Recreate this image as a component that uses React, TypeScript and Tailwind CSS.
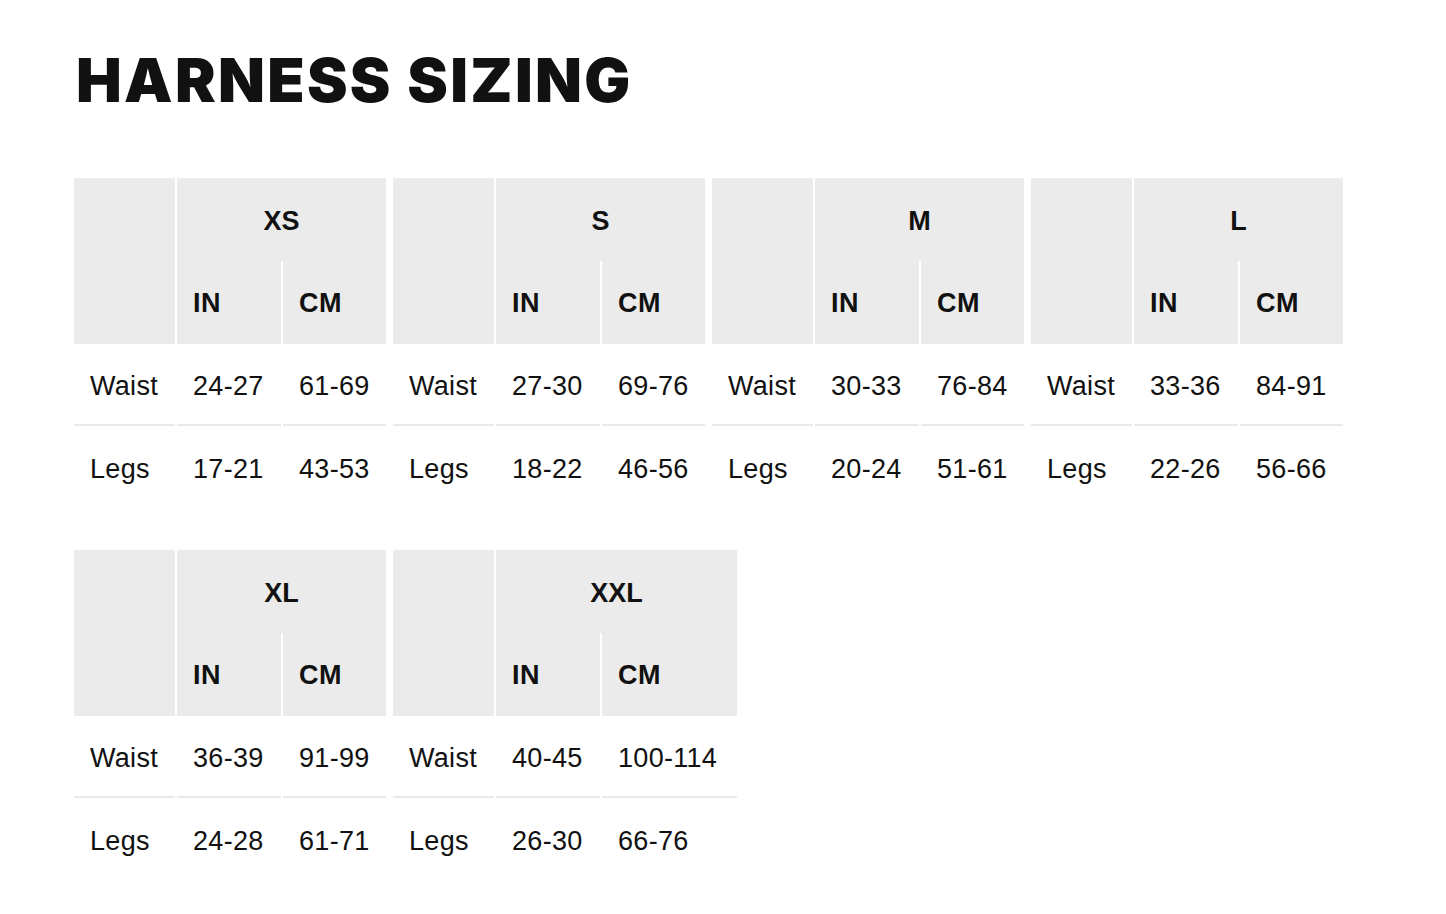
import React from "react";

type Size = { name: string; waist: [string, string]; legs: [string, string]; cm?: number };

const row1: Size[] = [
  { name: "XS", waist: ["24-27", "61-69"], legs: ["17-21", "43-53"] },
  { name: "S", waist: ["27-30", "69-76"], legs: ["18-22", "46-56"] },
  { name: "M", waist: ["30-33", "76-84"], legs: ["20-24", "51-61"] },
  { name: "L", waist: ["33-36", "84-91"], legs: ["22-26", "56-66"] },
];
const row2: Size[] = [
  { name: "XL", waist: ["36-39", "91-99"], legs: ["24-28", "61-71"] },
  { name: "XXL", waist: ["40-45", "100-114"], legs: ["26-30", "66-76"], cm: 1 },
];

function SizeTable({ s }: { s: Size }) {
  const cols = s.cm ? "grid-cols-[101px_104px_135px]" : "grid-cols-[101px_104px_103px]";
  const body = "flex items-center pl-4 pt-[5px] text-[27px] tracking-[0.3px]";
  const line = "border-b-2 border-[#e9e9e9]";
  return (
    <div className={`grid ${cols} grid-rows-[83px_83px_82px_82px] gap-x-[2px] text-[#111]`}>
      <div className="row-span-2 bg-[#ebebeb]" />
      <div className="col-span-2 bg-[#ebebeb] flex items-center justify-center pt-[4px] font-bold text-[27px]">{s.name}</div>
      <div className="bg-[#ebebeb] flex items-center pl-4 pt-[2px] font-bold text-[27px] tracking-[0.5px]">IN</div>
      <div className="bg-[#ebebeb] flex items-center pl-4 pt-[2px] font-bold text-[27px] tracking-[0.5px]">CM</div>
      <div className={`${body} ${line}`}>Waist</div>
      <div className={`${body} ${line}`}>{s.waist[0]}</div>
      <div className={`${body} ${line}`}>{s.waist[1]}</div>
      <div className={body}>Legs</div>
      <div className={body}>{s.legs[0]}</div>
      <div className={body}>{s.legs[1]}</div>
    </div>
  );
}

export default function App() {
  return (
    <div className="min-h-[914px] bg-white pl-[74px] pt-[44px]" style={{ fontFamily: '"Liberation Sans", Arial, sans-serif' }}>
      <h1
        className="text-[61px] leading-[72px] font-black text-[#111] tracking-[0.038em] pl-[2px]"
        style={{ fontFamily: 'Inter, "Liberation Sans", sans-serif' }}
      >
        HARNESS SIZING
      </h1>
      <div className="mt-[62px] flex flex-col gap-[42px]">
        <div className="flex gap-[7px]">
          {row1.map((s) => (
            <SizeTable key={s.name} s={s} />
          ))}
        </div>
        <div className="flex gap-[7px]">
          {row2.map((s) => (
            <SizeTable key={s.name} s={s} />
          ))}
        </div>
      </div>
    </div>
  );
}
